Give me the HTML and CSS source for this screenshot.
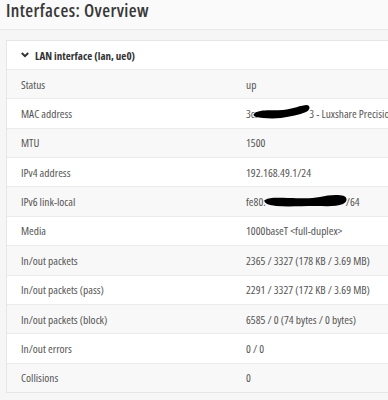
FILE: index.html
```html
<!DOCTYPE html>
<html>
<head>
<meta charset="utf-8">
<link rel="stylesheet" href="styles.css">
</head>
<body>
<header class="page-head">
  <h1 class="title">Interfaces: Overview</h1>
</header>
<main class="content">
  <section class="card">
    <div class="card-head">
      <svg class="chev" width="8" height="6" viewBox="0 0 8 6"><path d="M0.8 1 L4 4.2 L7.2 1" fill="none" stroke="#333" stroke-width="2"/></svg>
      <span class="card-title">LAN interface (lan, ue0)</span>
    </div>
    <div class="rows">
      <div class="row alt"><div class="lbl">Status</div><div class="val">up</div></div>
      <div class="row"><div class="lbl">MAC address</div><div class="val">3c:<svg class="blob" width="58" height="16" viewBox="0 0 58 16"><path d="M2 9 C8 5 20 7 30 6 C40 5 48 1 54 1 C58 2 57 6 53 8 C46 11 38 12 28 14 C18 15 8 14 3 13 C0 12 0 10 2 9 Z" fill="#000"/></svg>3 - Luxshare Precision Industry Company Limited</div></div>
      <div class="row alt"><div class="lbl">MTU</div><div class="val">1500</div></div>
      <div class="row"><div class="lbl">IPv4 address</div><div class="val">192.168.49.1/24</div></div>
      <div class="row alt"><div class="lbl">IPv6 link-local</div><div class="val">fe80:<svg class="blob blob6" width="84" height="14" viewBox="0 0 84 14"><path d="M1 6 C6 3 14 4 24 4 C36 4 46 5 56 3 C64 1 74 0 80 2 C84 4 83 8 79 10 C72 13 62 12 50 12 C38 12 24 13 12 12 C4 11 -1 9 1 6 Z" fill="#000"/></svg>/64</div></div>
      <div class="row"><div class="lbl">Media</div><div class="val">1000baseT &lt;full-duplex&gt;</div></div>
      <div class="row alt"><div class="lbl">In/out packets</div><div class="val">2365 / 3327 (178 KB / 3.69 MB)</div></div>
      <div class="row"><div class="lbl">In/out packets (pass)</div><div class="val">2291 / 3327 (172 KB / 3.69 MB)</div></div>
      <div class="row alt"><div class="lbl">In/out packets (block)</div><div class="val">6585 / 0 (74 bytes / 0 bytes)</div></div>
      <div class="row"><div class="lbl">In/out errors</div><div class="val">0 / 0</div></div>
      <div class="row alt"><div class="lbl">Collisions</div><div class="val">0</div></div>
    </div>
  </section>
</main>
</body>
</html>
```

FILE: styles.css
```css
html, body {
  margin: 0;
  padding: 0;
  overflow: hidden;
}
body {
  background: #f6f6f6;
  font-family: "Open Sans", sans-serif;
  font-stretch: 75%;
  color: #555;
}
.page-head {
  height: 29px;
  background: #fafafa;
  border-bottom: 1px solid #e8e8e8;
}
.title {
  margin: 0;
  padding: 0 0 0 6px;
  font-size: 18px;
  font-weight: 600;
  line-height: 20px;
  letter-spacing: 0.4px;
  color: #383838;
}
.content {
  padding: 10px 0 0 6px;
}
.card {
  background: #fff;
  border: 1px solid #e6e6e6;
  border-right: none;
  margin-right: -20px;
}
.card-head {
  height: 28px;
  display: flex;
  align-items: center;
  padding-left: 14px;
  gap: 6px;
}
.chev {
  display: block;
}
.card-title {
  font-size: 11px;
  font-weight: 700;
  color: #333;
}
.row {
  display: grid;
  grid-template-columns: 225px 1fr;
  align-items: center;
  height: 29.36px;
  box-sizing: border-box;
  border-top: 1px solid #ebebeb;
  font-size: 11.4px;
  white-space: nowrap;
}
.row.alt {
  background: #f8f8f8;
}
.lbl, .val {
  padding-left: 14px;
}
.val {
  display: flex;
  align-items: center;
}
.blob {
  display: block;
  margin: -4px -2px 0 -4px;
}
.blob6 {
  margin: -2px -2px 0 -2px;
}
```
